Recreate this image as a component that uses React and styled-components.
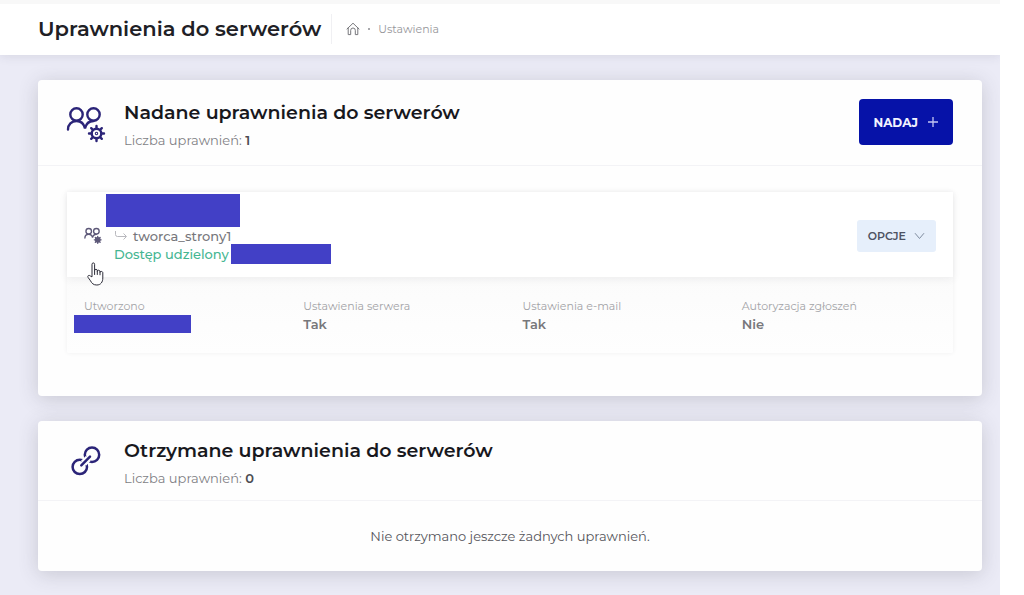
import React from "react";
import styled, { createGlobalStyle } from "styled-components";

const fontFamily = `Montserrat, Inter, "Open Sans", sans-serif`;
const navy = "#2b2478";

const details = [
  { label: "Utworzono", hidden: true },
  { label: "Ustawienia serwera", value: "Tak" },
  { label: "Ustawienia e-mail", value: "Tak" },
  { label: "Autoryzacja zgłoszeń", value: "Nie" },
];

function HomeIcon() {
  return (
    <svg width="14" height="14" viewBox="0 0 14 14" fill="none" stroke="#77777c" strokeLinejoin="round" strokeLinecap="round">
      <path d="M1 7 7 1.2 13 7" />
      <path d="M2.2 6v6.6h2.500V8.300a2.300 2.300 0 0 1 4.600 0v4.300h2.500V6" />
    </svg>
  );
}

function UsersGearIcon({ size, color, stroke, hub = "none" }) {
  return (
    <svg width={size} height={size} viewBox="0 0 40 40" fill="none" stroke={color} strokeWidth={stroke} strokeLinecap="round">
      <circle cx="10.5" cy="9.5" r="6.2" />
      <circle cx="27.5" cy="9.5" r="6.2" />
      <path d="M2 24.5c0-5 3.500-8.500 8.500-8.500s7.500 3 8.500 7.500c1-4.500 4-7.500 8.500-7.500" />
      <circle cx="30.500" cy="28.500" r="4.800" fill={hub} />
      <path d="M30.500 23.500v-2.500M30.500 33.500v2.500M25.500 28.500h-2.500M35.500 28.500h2.500M27 25l-1.800-1.800M34 25l1.800-1.800M27 32l-1.800 1.800M34 32l1.800 1.800" />
      <circle cx="30.500" cy="28.500" r="0.500" />
    </svg>
  );
}

function ChainIcon() {
  return (
    <svg width="30" height="34" viewBox="0 0 30 34" fill="none" stroke={navy} strokeWidth="2.500" strokeLinecap="round">
      <circle cx="21" cy="8.700" r="7.200" />
      <circle cx="8.800" cy="20.900" r="7.200" />
      <path d="M12.500 17.200 17.300 12.400" stroke="#fefefe" strokeWidth="7" strokeLinecap="butt" />
      <path d="M10.300 19.400 19 10.700" />
    </svg>
  );
}

function ArrowIcon() {
  return (
    <svg width="14" height="10" viewBox="0 0 14 10" fill="none" stroke="#b9b9be">
      <path d="M1.500 0v3.500q0 2 2 2h8.500M9.500 2.500l3 3-3 3" />
    </svg>
  );
}

function PlusIcon() {
  return (
    <svg width="10" height="10" viewBox="0 0 10 10" stroke="#c3c6f2" strokeWidth="1.300">
      <path d="M5 0v10M0 5h10" />
    </svg>
  );
}

function ChevronIcon() {
  return (
    <svg width="11" height="8" viewBox="0 0 11 8" fill="none" stroke="#7f8c9f">
      <path d="M1 1.200 5.500 6.500 10 1.200" />
    </svg>
  );
}

function HandIcon() {
  return (
    <svg width="18" height="24" viewBox="0 0 18 24" fill="#fff" stroke="#2c2c38" strokeLinejoin="round" strokeLinecap="round">
      <path d="M5 14.500V2.300C5 .4 7.600.4 7.600 2.300v6.200c0-1.600 2.700-1.600 2.700 0v.8c0-1.500 2.700-1.400 2.700.2v.8c0-1.300 2.800-1.200 2.800.5V16c0 4-2 7-6 7-3.400 0-4.800-1.500-6.300-4.200L1 15.300c-.8-1.600 1-2.700 2.200-1.500z" />
      <path d="M7.600 8.500v4M10.300 9v3.500M13 9.800v3" />
    </svg>
  );
}

function SectionHead({ icon, title, count, children }) {
  return (
    <Head $tall={!!children}>
      <IconBox>{icon}</IconBox>
      <div className="texts">
        <h2>{title}</h2>
        <p>
          Liczba uprawnień: <b>{count}</b>
        </p>
      </div>
      {children}
    </Head>
  );
}

function App() {
  return (
    <Page>
      <GlobalStyle />
      <TopBar>
        <h1>Uprawnienia do serwerów</h1>
        <Breadcrumbs aria-label="Ścieżka">
          <a href="#" aria-label="Start">
            <HomeIcon />
          </a>
          <i />
          <a href="#">Ustawienia</a>
        </Breadcrumbs>
      </TopBar>

      <Content>
        <Card>
          <SectionHead
            icon={<UsersGearIcon size={40} color={navy} stroke={2.4} />}
            title="Nadane uprawnienia do serwerów"
            count={1}
          >
            <GrantButton type="button">
              NADAJ <PlusIcon />
            </GrantButton>
          </SectionHead>
          <CardBody>
            <Item>
              <ItemRow>
                <UsersGearIcon size={18} color="#5d5878" stroke={3} hub="#5d5878" />
                <div className="info">
                  <Redacted $width={134} $height={33} $shift={8} />
                  <div className="line">
                    <ArrowIcon />
                    tworca_strony1
                  </div>
                  <div className="line granted">
                    Dostęp udzielony
                    <Redacted $width={100} $height={20} />
                  </div>
                </div>
                <OptionsButton type="button">
                  OPCJE <ChevronIcon />
                </OptionsButton>
                <Pointer>
                  <HandIcon />
                </Pointer>
              </ItemRow>
              <Details>
                {details.map((d) => (
                  <div key={d.label}>
                    <dt>{d.label}</dt>
                    <dd>{d.hidden ? <Redacted $width={117} $height={18} $shift={10} /> : d.value}</dd>
                  </div>
                ))}
              </Details>
            </Item>
          </CardBody>
        </Card>

        <Card>
          <SectionHead icon={<ChainIcon />} title="Otrzymane uprawnienia do serwerów" count={0} />
          <Empty>Nie otrzymano jeszcze żadnych uprawnień.</Empty>
        </Card>
      </Content>
    </Page>
  );
}

export default App;

const GlobalStyle = createGlobalStyle`
  *{
    box-sizing:border-box;
  }
  body{
    margin:0;
    background:#fff;
    font-family:${fontFamily};
  }
  h1, h2, p, dl, dd{
    margin:0;
  }
  svg{
    display:block;
    flex-shrink:0;
  }
  a{
    color:inherit;
    text-decoration:none;
  }
`;

const Page = styled.div`
  min-height:100vh;
  margin-right:24px;
  display:flex;
  flex-direction:column;
  background:#ebebf6;
  overflow:hidden;
`;

const TopBar = styled.header`
  position:relative;
  display:flex;
  align-items:center;
  height:55px;
  padding:0 38px 2px;
  background:#fff;
  border-top:4px solid #f8f8f8;
  box-shadow:0 1px 10px rgba(60, 55, 80, 0.12);
  h1{
    font-size:21px;
    line-height:28px;
    font-weight:600;
    color:#202025;
    white-space:nowrap;
  }
`;

const Breadcrumbs = styled.nav`
  display:flex;
  align-items:center;
  height:30px;
  margin-left:10px;
  padding-left:14px;
  border-left:1px solid #f0f0f3;
  font-size:11px;
  color:#97979c;
  i{
    width:2px;
    height:2px;
    margin:0 8px;
    border-radius:50%;
    background:#8d8d92;
  }
`;

const Content = styled.main`
  flex:1;
  display:flex;
  flex-direction:column;
  gap:25px;
  padding:25px 18px 24px 38px;
`;

const Card = styled.section`
  background:#fefefe;
  border-radius:4px;
  box-shadow:0 3px 20px rgba(60, 60, 70, 0.2);
`;

const Head = styled.div`
  display:flex;
  align-items:center;
  padding:${(p) => (p.$tall ? "19px 29px 15px 28px" : "16px 29px 12px 28px")};
  border-bottom:1px solid #f3f3f6;
  .texts{
    flex:1;
  }
  h2{
    font-size:19px;
    line-height:28px;
    font-weight:600;
    color:#18181d;
  }
  p{
    margin-top:3px;
    font-size:13px;
    line-height:20px;
    color:#7f7f84;
  }
  b{
    font-weight:600;
    color:#4c4c52;
  }
`;

const IconBox = styled.div`
  display:flex;
  justify-content:center;
  width:40px;
  margin-right:18px;
`;

const GrantButton = styled.button`
  display:flex;
  align-items:center;
  align-self:flex-start;
  gap:10px;
  height:46px;
  padding:0 15px 0 14px;
  border:0;
  border-radius:4px;
  background:#0612a8;
  color:#f2f3ff;
  font-family:inherit;
  font-size:12px;
  font-weight:700;
`;

const CardBody = styled.div`
  padding:26px 29px 43px;
`;

const Item = styled.div`
  border-radius:2px;
  background:linear-gradient(#f8f8f8, #fefefe);
  box-shadow:0 0 4px rgba(60, 60, 80, 0.08);
`;

const ItemRow = styled.div`
  position:relative;
  display:flex;
  align-items:center;
  padding:2px 17px 0;
  background:#fff;
  box-shadow:0 2px 8px rgba(60, 60, 80, 0.08);
  .info{
    flex:1;
    margin-left:12px;
    padding-bottom:14px;
    font-size:13px;
    font-weight:500;
    color:#77777c;
  }
  .line{
    display:flex;
    align-items:center;
    gap:5px;
    height:18px;
    white-space:nowrap;
  }
  .granted{
    gap:2px;
    color:#45b692;
  }
`;

const Redacted = styled.div`
  width:${(p) => p.$width}px;
  height:${(p) => p.$height}px;
  margin-left:-${(p) => p.$shift || 0}px;
  background:#4240c6;
`;

const OptionsButton = styled.button`
  display:flex;
  align-items:center;
  gap:8px;
  height:32px;
  padding:0 11px;
  border:0;
  border-radius:3px;
  background:#e6effb;
  color:#4d5262;
  font-family:inherit;
  font-size:11px;
  font-weight:600;
`;

const Pointer = styled.span`
  position:absolute;
  left:20px;
  bottom:-9px;
`;

const Details = styled.dl`
  display:grid;
  grid-template-columns:repeat(4, 1fr);
  gap:8px;
  padding:20px 0 20px 17px;
  line-height:18px;
  dt{
    font-size:11px;
    color:#a3a3a7;
  }
  dd{
    font-size:13px;
    font-weight:600;
    color:#77777b;
  }
`;

const Empty = styled.p`
  padding:25px 20px;
  font-size:13px;
  line-height:20px;
  color:#55555b;
  text-align:center;
`;
